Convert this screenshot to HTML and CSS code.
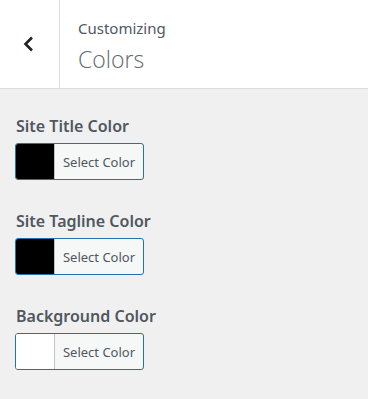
FILE: index.html
```html
<!DOCTYPE html>
<html>
<head>
<meta charset="utf-8">
<link rel="stylesheet" href="styles.css">
</head>
<body>
<div class="panel">
  <header class="head">
    <button class="back" aria-label="Back">
      <svg width="12" height="16" viewBox="0 0 12 16"><polyline points="9,1.5 2.5,8 9,14.5" fill="none" stroke="#1d2327" stroke-width="2.6"/></svg>
    </button>
    <div class="titles">
      <div class="sub">Customizing</div>
      <div class="title">Colors</div>
    </div>
  </header>
  <main class="controls">
    <div class="control">
      <div class="label">Site Title Color</div>
      <div class="picker"><span class="swatch black"></span><span class="btn">Select Color</span></div>
    </div>
    <div class="control">
      <div class="label">Site Tagline Color</div>
      <div class="picker"><span class="swatch black"></span><span class="btn">Select Color</span></div>
    </div>
    <div class="control">
      <div class="label">Background Color</div>
      <div class="picker"><span class="swatch white"></span><span class="btn">Select Color</span></div>
    </div>
  </main>
</div>
</body>
</html>
```
FILE: styles.css
```css
html, body { margin: 0; padding: 0; }
body {
  width: 368px;
  height: 399px;
  background: #f0f0f1;
  font-family: "Noto Sans", "Open Sans", sans-serif;
  overflow: hidden;
}
.head {
  display: flex;
  height: 88px;
  background: #fff;
  border-bottom: 1px solid #dcdcde;
}
.back {
  width: 60px;
  border: 0;
  border-right: 1px solid #dcdcde;
  background: #fff;
  padding: 0;
  display: flex;
  align-items: center;
  justify-content: center;
  padding-right: 2px;
}
.titles {
  padding: 18px 0 0 18px;
}
.sub {
  font-size: 15px;
  line-height: 20px;
  color: #50575e;
}
.title {
  margin-top: 6px;
  font-family: "Open Sans", "Noto Sans", sans-serif;
  font-size: 23px;
  line-height: 30px;
  font-weight: 300;
  color: #646970;
}
.controls {
  padding: 26px 0 0 15px;
  display: flex;
  flex-direction: column;
  gap: 30px;
}
.label {
  padding-left: 1px;
  font-size: 16px;
  line-height: 22px;
  font-weight: 600;
  color: #50575e;
  margin-bottom: 6px;
}
.picker {
  display: flex;
  width: 127px;
  height: 35px;
  border: 1px solid #2271b1;
  border-radius: 3px;
  overflow: hidden;
  background: #f6f7f7;
}
.swatch {
  width: 38px;
  border-right: 1px solid #c3c4c7;
}
.swatch.black { background: #000; }
.swatch.white { background: #fff; }
.btn {
  flex: 1;
  display: flex;
  align-items: center;
  justify-content: center;
  font-size: 13px;
  color: #50575e;
}
```
